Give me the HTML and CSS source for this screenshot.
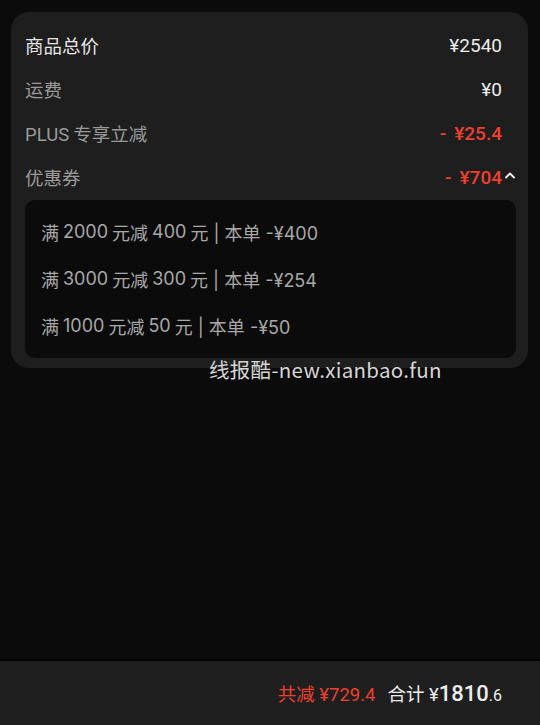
FILE: index.html
```html
<!DOCTYPE html>
<html lang="zh">
<head>
<meta charset="utf-8">
<link rel="stylesheet" href="styles.css">
</head>
<body>
<div class="page">
  <section class="card">
    <div class="row">
      <span class="label strong">商品总价</span>
      <span class="value">¥2540</span>
    </div>
    <div class="row">
      <span class="label">运费</span>
      <span class="value">¥0</span>
    </div>
    <div class="row">
      <span class="label">PLUS<span class="gap"></span>专享立减</span>
      <span class="value red">-<span class="mgap"></span>¥25.4</span>
    </div>
    <div class="row">
      <span class="label">优惠券</span>
      <span class="value red">-<span class="mgap"></span>¥704<svg class="chev" width="12" height="8" viewBox="0 0 12 8"><path d="M2 6.5 L6 2.5 L10 6.5" fill="none" stroke="#f2f2f2" stroke-width="1.8" stroke-linecap="round" stroke-linejoin="round"/></svg></span>
    </div>
    <div class="coupons">
      <div class="coupon">满<span class="gap"></span>2000<span class="gap"></span>元减<span class="gap"></span>400<span class="gap"></span>元 | 本单 -¥400</div>
      <div class="coupon">满<span class="gap"></span>3000<span class="gap"></span>元减<span class="gap"></span>300<span class="gap"></span>元 | 本单 -¥254</div>
      <div class="coupon">满<span class="gap"></span>1000<span class="gap"></span>元减<span class="gap"></span>50<span class="gap"></span>元 | 本单 -¥50</div>
    </div>
    <div class="watermark">线报酷-new.xianbao.fun</div>
  </section>
</div>
<footer class="bar">
  <span class="saved">共减 ¥729.4</span>
  <span class="total">合计 ¥<span class="big">1810</span><span class="small">.6</span></span>
</footer>
</body>
</html>
```
FILE: styles.css
```css
html, body {
  margin: 0;
  padding: 0;
  background: #0b0b0b;
  height: 100%;
}
body {
  font-family: Roboto, "Noto Sans CJK SC", sans-serif;
  color: #ececec;
}
.page {
  padding: 12px 12px 0 11px;
}
.card {
  position: relative;
  background: #1e1e1e;
  border-radius: 18px;
  padding: 11px 12px 10px 14px;
}
.row {
  height: 44px;
  display: flex;
  align-items: center;
  justify-content: space-between;
  padding-right: 14px;
  font-size: 18.5px;
}
.label {
  color: #9a9a9a;
}
.label.strong {
  color: #e6e6e6;
}
.gap {
  display: inline-block;
  width: 4px;
}
.mgap {
  display: inline-block;
  width: 8px;
}
.value {
  color: #ececec;
  font-size: 19px;
  display: flex;
  align-items: center;
}
.value.red {
  color: #ee3f2f;
  font-weight: 500;
}
.chev {
  margin-right: -14px;
  margin-left: 2px;
  margin-bottom: 4px;
}
.coupons {
  margin-top: 1px;
  background: #0b0b0b;
  border-radius: 10px;
  padding: 8px 16px 9px 16px;
}
.coupon {
  height: 47px;
  display: flex;
  align-items: center;
  font-family: Inter, "Noto Sans CJK SC", sans-serif;
  font-size: 18px;
  color: #a8a8a8;
  white-space: pre;
}
.watermark {
  position: absolute;
  left: 198px;
  top: 342px;
  font-size: 20.5px;
  color: #d6d6d6;
  font-family: "Noto Sans CJK SC", sans-serif;
  letter-spacing: 0.3px;
}
.bar {
  position: fixed;
  left: 0;
  right: 0;
  bottom: 0;
  height: 64px;
  background: #1f1f1f;
  border-top: 2px solid #060606;
  display: flex;
  align-items: center;
  justify-content: flex-end;
  padding-right: 38px;
  gap: 12px;
  font-size: 18.5px;
}
.saved {
  color: #ee3f2f;
}
.total {
  color: #ececec;
}
.big {
  font-size: 22px;
  font-weight: 500;
}
.small {
  font-size: 16px;
}
```
